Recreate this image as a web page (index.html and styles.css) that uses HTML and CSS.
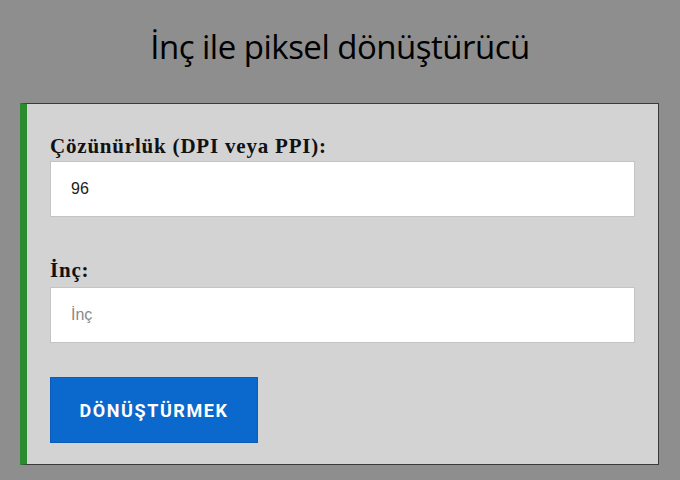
FILE: index.html
```html
<!DOCTYPE html>
<html lang="tr">
<head>
<meta charset="utf-8">
<title>İnç ile piksel dönüştürücü</title>
<link rel="stylesheet" href="styles.css">
</head>
<body>
<h1 class="title">İnç ile piksel dönüştürücü</h1>
<div class="card">
  <label class="label" for="dpi">Çözünürlük (DPI veya PPI):</label>
  <input class="field" id="dpi" type="text" value="96">
  <label class="label label-second" for="inch">İnç:</label>
  <input class="field" id="inch" type="text" placeholder="İnç">
  <button class="btn" type="button">DÖNÜŞTÜRMEK</button>
</div>
</body>
</html>
```
FILE: styles.css
```css
html, body {
  margin: 0;
  padding: 0;
}
body {
  background: #8e8e8e;
  width: 680px;
  height: 480px;
  overflow: hidden;
  display: flex;
  flex-direction: column;
}
.title {
  margin: 24px 0 0 0;
  height: 79px;
  font-family: "Open Sans", "DejaVu Sans", sans-serif;
  font-weight: 400;
  font-size: 33px;
  line-height: 46px;
  letter-spacing: -0.5px;
  text-align: center;
  color: #000;
}
.card {
  margin-left: 20px;
  width: 585px;
  background: #d3d3d3;
  border: 1px solid #3a3a3a;
  border-left: 7px solid #2a8c2e;
  padding: 30px 23px 21px 23px;
  display: flex;
  flex-direction: column;
  align-items: flex-start;
}
.label {
  font-family: "Liberation Serif", "Times New Roman", serif;
  font-weight: 700;
  font-size: 21px;
  line-height: 24px;
  letter-spacing: 0.8px;
  color: #111;
  margin-bottom: 3px;
}
.label-second {
  margin-top: 41px;
  margin-bottom: 5px;
}
.field {
  box-sizing: border-box;
  width: 100%;
  height: 56px;
  margin: 0;
  border: 1px solid #c4c4c4;
  background: #fff;
  padding: 0 20px;
  font-family: "Liberation Sans", Arial, sans-serif;
  font-size: 16px;
  color: #222;
  outline: none;
}
.field::placeholder {
  color: #8a8a8a;
}
.btn {
  margin-top: 34px;
  width: 208px;
  height: 66px;
  border: 1px solid #0a5cb8;
  background: #0b68cc;
  color: #fff;
  font-family: Roboto, "Liberation Sans", sans-serif;
  font-weight: 700;
  font-size: 18px;
  letter-spacing: 1.6px;
  padding: 0;
  cursor: pointer;
}
```
